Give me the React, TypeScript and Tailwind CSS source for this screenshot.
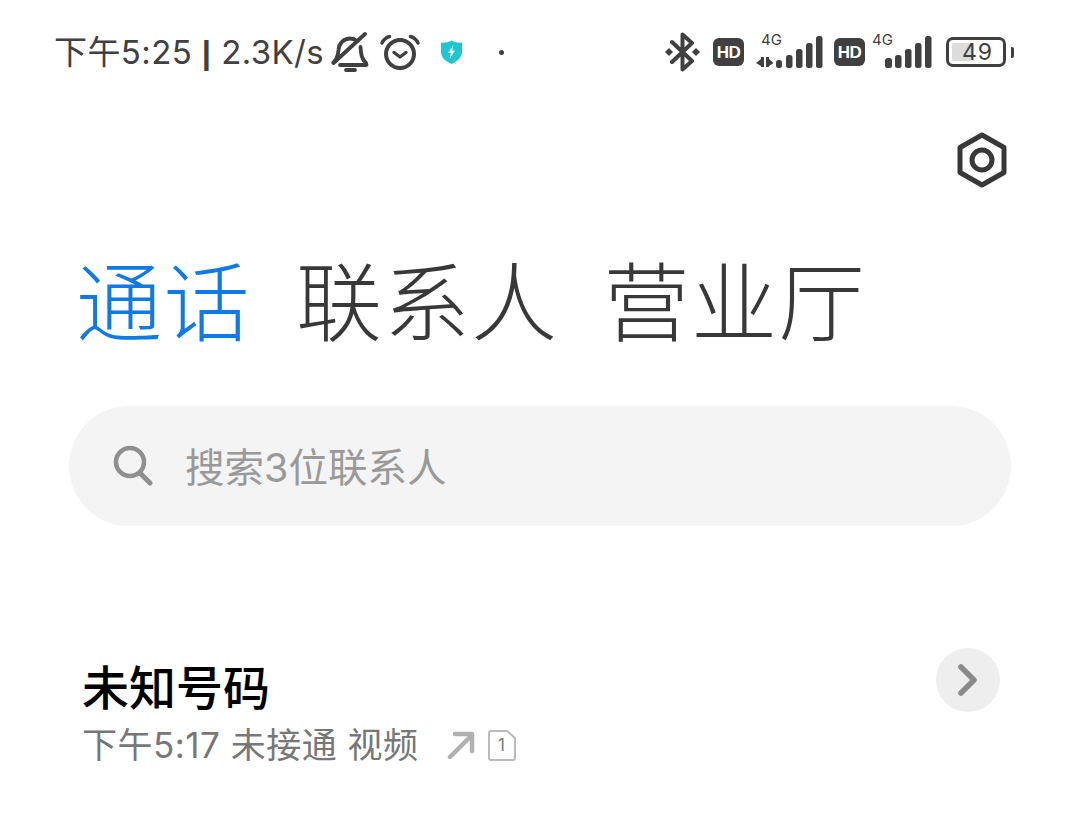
const font = { fontFamily: "Inter, 'Noto Sans CJK SC', sans-serif" };

function BellOff() {
  return (
    <svg width="38" height="40" viewBox="0 0 38 40" fill="none" stroke="#404040" strokeWidth="3.8" strokeLinecap="round" strokeLinejoin="round">
      <path d="M2.5 30.5 C6.5 27 7 23 7.5 18 C8 11 13 6.5 19 6.5 C21.5 6.5 24 7.3 26 9" />
      <path d="M29.5 15 C30 22 30.5 27 35 31 L35.5 33 H9" />
      <path d="M2.5 31 L34 2" />
      <path d="M15 38 H24" />
    </svg>
  );
}

function Alarm() {
  return (
    <svg width="40" height="36" viewBox="0 0 40 36" fill="none" stroke="#404040" strokeLinecap="round" strokeLinejoin="round">
      <circle cx="20" cy="20" r="14" strokeWidth="4" />
      <path d="M14 18.5 L20 23 L26 18.5" strokeWidth="3.4" />
      <path d="M2 9 C3.5 6 6 3.5 9.5 2.5" strokeWidth="3.4" />
      <path d="M38 9 C36.5 6 34 3.5 30.5 2.5" strokeWidth="3.4" />
    </svg>
  );
}

function Shield() {
  return (
    <svg width="23" height="24" viewBox="0 0 23 24">
      <path d="M1 2.5 C4 3 8 2.5 11.5 0.5 C15 2.5 19 3 22 2.5 V12 C22 17.5 17 21.5 11.5 24 C6 21.5 1 17.5 1 12 Z" fill="#1ec6cf" />
      <path d="M13.5 5 L8 13 H11 L9.5 19 L15 10.5 H12 Z" fill="#ffffff" />
    </svg>
  );
}

function Bluetooth() {
  return (
    <svg width="36" height="40" viewBox="0 0 36 40" fill="#404040">
      <path d="M7 10 L27 29 L17.5 37.5 V2.5 L27 11 L7 30" fill="none" stroke="#404040" strokeWidth="4" strokeLinecap="round" strokeLinejoin="round" />
      <path d="M0 20 L4 16 L8 20 L4 24 Z" />
      <path d="M27 20 L31 16 L35 20 L31 24 Z" />
    </svg>
  );
}

function HdBadge() {
  return (
    <div className="flex h-[28px] w-[31px] items-center justify-center rounded-[6px] bg-[#404040] text-[17px] leading-none font-bold tracking-[-0.5px] text-white" style={{ fontFamily: "'Liberation Sans', sans-serif" }}>
      HD
    </div>
  );
}

function Signal({ transfer }: { transfer?: boolean }) {
  return (
    <svg width="68" height="32" viewBox="0 0 68 32" fill="#404040">
      {transfer ? (
        <>
          <path d="M1 27 L6 23 V21 H9 V31 H6 V30 Z" />
          <path d="M11 21 H14 V23 L18.5 27 L14 30 V31 H11 Z" />
          <rect x="21" y="24" width="6" height="8" rx="2.5" />
        </>
      ) : (
        <rect x="21" y="22" width="7" height="10" rx="2.5" />
      )}
      <rect x="31" y="19" width="6.5" height="13" rx="2.5" />
      <rect x="41" y="13" width="6.5" height="19" rx="2.5" />
      <rect x="51" y="7" width="6.5" height="25" rx="2.5" />
      <rect x="61" y="0" width="6.5" height="32" rx="2.5" />
    </svg>
  );
}

function Network({ transfer }: { transfer?: boolean }) {
  return (
    <div className="relative h-[32px] w-[68px]">
      <Signal transfer={transfer} />
      <span className={`absolute top-[-4px] text-[15px] leading-none text-[#404040] ${transfer ? 'left-[6px]' : 'left-[8px]'}`}>4G</span>
    </div>
  );
}

function Battery() {
  return (
    <div className="flex items-center gap-[5px]">
      <div className="flex h-[30px] w-[60px] items-center rounded-[7px] border-[3px] border-[#404040] p-[3px]">
        <div className="relative h-full w-full">
          <div className="h-full w-[46%] rounded-[2px] bg-[#dcdcdc]" />
          <span className="absolute inset-0 flex items-center justify-center pl-[3px] text-[23px] leading-none tracking-[1px] text-[#404040]">49</span>
        </div>
      </div>
      <div className="h-[11px] w-[3px] rounded-r-[2px] bg-[#404040]" />
    </div>
  );
}

function StatusBar() {
  return (
    <div className="flex h-[104px] items-center justify-between pr-[66px] pl-[54px] text-[#404040]">
      <div className="flex items-center">
        <span className="text-[33px] leading-none tracking-[0.4px] whitespace-nowrap">
          下午5:25 <span className="font-semibold" style={{ fontFamily: "'Liberation Sans', sans-serif" }}>|</span> 2.3K/s
        </span>
        <div className="ml-[7px]"><BellOff /></div>
        <div className="ml-[11px]"><Alarm /></div>
        <div className="ml-[20px]"><Shield /></div>
        <div className="ml-[36px] size-[5px] rounded-full bg-[#404040]" />
      </div>
      <div className="flex items-center">
        <Bluetooth />
        <div className="ml-[12px]"><HdBadge /></div>
        <div className="ml-[11px]"><Network transfer /></div>
        <div className="ml-[11px]"><HdBadge /></div>
        <div className="ml-[-1px]"><Network /></div>
        <div className="ml-[14px]"><Battery /></div>
      </div>
    </div>
  );
}

function SettingsIcon() {
  return (
    <svg width="52" height="56" viewBox="0 0 52 56" fill="none" stroke="#383838">
      <path d="M26 3 L48 15.5 V40.5 L26 53 L4 40.5 V15.5 Z" strokeWidth="5" strokeLinejoin="round" />
      <circle cx="26" cy="28" r="10" strokeWidth="5" />
    </svg>
  );
}

export default function App() {
  return (
    <div className="h-[824px] w-[1080px] overflow-hidden bg-white" style={font}>
      <StatusBar />

      {/* Settings */}
      <div className="flex justify-end pt-[28px] pr-[72px]">
        <SettingsIcon />
      </div>

      {/* Tabs */}
      <div className="mt-[66px] flex gap-[45px] pl-[76px] text-[86px] leading-[100px] font-light tracking-[1.5px] text-[#383838]">
        <span className="text-[#0f7ae5]">通话</span>
        <span>联系人</span>
        <span>营业厅</span>
      </div>

      {/* Search */}
      <div className="mx-[69px] mt-[52px] flex h-[120px] items-center rounded-[60px] bg-[#f4f4f4] pl-[44px]">
        <svg width="40" height="42" viewBox="0 0 40 42" fill="none" stroke="#8f8f8f" strokeLinecap="round">
          <circle cx="17" cy="17" r="14" strokeWidth="4.5" />
          <path d="M28 29 L37 38" strokeWidth="5" />
        </svg>
        <span className="mt-[5px] ml-[32px] text-[39.5px] leading-none text-[#999999]">搜索3位联系人</span>
      </div>

      {/* Call row */}
      <div className="mt-[122px] flex items-start justify-between pr-[80px] pl-[82px]">
        <div className="pt-[12px]">
          <div className="text-[47px] leading-[56px] font-medium text-black">未知号码</div>
          <div className="mt-[4px] flex items-center text-[35px] leading-[50px] tracking-[0.5px] text-[#777777]">
            <span>下午5:17 未接通 视频</span>
            <svg className="ml-[28px]" width="28" height="28" viewBox="0 0 28 28" fill="none" stroke="#b0b0b0" strokeWidth="4.5" strokeLinecap="round" strokeLinejoin="round">
              <path d="M3 26 L25 4 M8 3 H25 V20" />
            </svg>
            <div className="relative ml-[13px] h-[31px] w-[28px]">
              <svg width="28" height="31" viewBox="0 0 28 31" fill="none" stroke="#bbbbbb" strokeWidth="2">
                <path d="M3 1 H19 L27 8 V28 Q27 30 25 30 H3 Q1 30 1 28 V3 Q1 1 3 1 Z" />
              </svg>
              <span className="absolute inset-0 flex items-center justify-center text-[17px] leading-none text-[#777777]">1</span>
            </div>
          </div>
        </div>
        <div className="flex size-[64px] items-center justify-center rounded-full bg-[#eeeeee]">
          <svg width="20" height="32" viewBox="0 0 20 32" fill="none" stroke="#8a8a8a" strokeWidth="5.5" strokeLinecap="round" strokeLinejoin="round">
            <path d="M3 3 L16 16 L3 29" />
          </svg>
        </div>
      </div>
    </div>
  );
}
